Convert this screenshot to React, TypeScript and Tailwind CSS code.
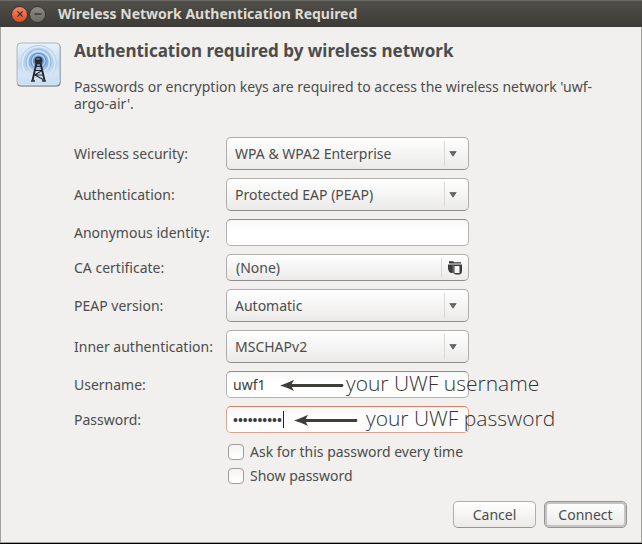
import { useState } from "react";
import type { InputHTMLAttributes, ReactNode } from "react";

function Row({ id, label, children }: { id: string; label: string; children: ReactNode }) {
  return (
    <div className="flex items-center">
      <label htmlFor={id} className="w-[152px] shrink-0 whitespace-nowrap">
        {label}
      </label>
      <div className="relative w-[243px] shrink-0">{children}</div>
    </div>
  );
}

function Combo({ id, options }: { id: string; options: string[] }) {
  return (
    <>
      <select
        id={id}
        className="block h-[33px] w-full appearance-none rounded-[5px] border border-[#b0aeab] border-b-[#8f8d8a] bg-linear-to-b from-white to-[#ebeae9] pr-8 pl-2 outline-none"
      >
        {options.map((option) => (
          <option key={option}>{option}</option>
        ))}
      </select>
      <span className="pointer-events-none absolute inset-y-1 right-0 flex w-[25px] items-center border-l border-[#dad8d6] pl-1">
        <svg viewBox="0 0 8 6" className="h-[6px] w-2" aria-hidden="true">
          <path d="M0.3 0.3H7.7L4 5.7Z" fill="#4c4c4c" />
          <path d="M2 1.6H6L4 4.4Z" fill="#777" />
        </svg>
      </span>
    </>
  );
}

function Entry({ active, ...props }: { active?: boolean } & InputHTMLAttributes<HTMLInputElement>) {
  return (
    <input
      {...props}
      className={
        "block h-[27px] w-full rounded-[5px] border bg-linear-to-b from-[#f6f6f6] to-white to-40% px-1.5 text-[#3c3c3c] outline-none " +
        (active ? "border-[#e6a18a] border-t-[#dd7f60] text-[13px] font-bold" : "border-[#b5b3b1] border-t-[#8b8a89]")
      }
    />
  );
}

function Note({ text, className, textClass }: { text: string; className: string; textClass: string }) {
  return (
    <span
      className={
        "pointer-events-none absolute inset-y-0 flex items-center font-['Open_Sans','Noto_Sans',sans-serif] font-light text-[#333] " +
        className
      }
    >
      <svg viewBox="0 0 64 12" className="h-3 w-16 shrink-0" aria-hidden="true">
        <path d="M11 6.5H62" stroke="#3f3e39" strokeWidth="2.8" strokeLinecap="round" />
        <path d="M0 6.5C5 5 10 3 14 0.8L11 6.5L14 12C10 9.8 5 8 0 6.5Z" fill="#3f3e39" />
      </svg>
      <span className={"pb-1 text-[21px] leading-6 whitespace-nowrap " + textClass}>{text}</span>
    </span>
  );
}

function Check({ label, checked, onChange }: { label: string; checked?: boolean; onChange?: (on: boolean) => void }) {
  return (
    <label className="flex h-6 items-center gap-1.5">
      <input
        type="checkbox"
        checked={checked}
        onChange={(event) => onChange?.(event.target.checked)}
        className="size-4 appearance-none rounded-[4px] border border-[#a09e9c] bg-linear-to-b from-[#f4f4f4] to-white checked:bg-[#dd7f60]"
      />
      <span className="pb-0.5">{label}</span>
    </label>
  );
}

function AntennaIcon() {
  return (
    <svg viewBox="0 0 46 46" className="size-[46px] shrink-0" aria-hidden="true">
      <defs>
        <linearGradient id="tile" x1="0" y1="0" x2="0" y2="1">
          <stop offset="0" stopColor="#eaf1f9" />
          <stop offset="0.5" stopColor="#c5dbf2" />
          <stop offset="1" stopColor="#dbe9f7" />
        </linearGradient>
        <linearGradient id="ground" x1="0" y1="0" x2="0" y2="1">
          <stop offset="0" stopColor="#d3e4f5" stopOpacity="0" />
          <stop offset="0.5" stopColor="#d3e4f5" />
          <stop offset="1" stopColor="#c9def3" />
        </linearGradient>
      </defs>
      <rect x="2" y="2.5" width="43.5" height="43" rx="4" fill="#5c6672" />
      <rect x="2" y="2" width="43" height="42.5" rx="4" fill="url(#tile)" stroke="#a7b0ba" strokeWidth="0.9" />
      <circle cx="23.5" cy="22" r="18" fill="#b4d0ed" />
      <circle cx="23.5" cy="22" r="16.2" fill="none" stroke="#dceaf8" strokeWidth="1.8" />
      <circle cx="23.5" cy="21" r="12.8" fill="#8db4df" />
      <circle cx="23.5" cy="21" r="11" fill="none" stroke="#cfe2f5" strokeWidth="1.8" />
      <circle cx="23.5" cy="20" r="8" fill="#6595cc" />
      <circle cx="23.5" cy="20" r="6.3" fill="none" stroke="#b4d0ee" strokeWidth="1.4" />
      <path d="M3 24H44V41Q44 43.5 41.5 43.5H5.500Q3 43.500 3 41Z" fill="url(#ground)" />
      <path d="M21.700 21L17.500 39.500M25.300 21L29.500 39.500" stroke="#25282b" strokeWidth="1.9" />
      <path d="M20 29.500H27M19 34H28M20 34L28 38.500M26.500 30L19.500 34M21 25.500H26" stroke="#25282b" strokeWidth="1.1" />
      <path d="M16 40H20M27 40H31" stroke="#25282b" strokeWidth="1.6" />
      <circle cx="23.5" cy="19.5" r="3.8" fill="#292b2e" />
      <ellipse cx="23" cy="17.8" rx="2.2" ry="1.1" fill="#6d7073" />
    </svg>
  );
}

function WindowButton({ label, close }: { label: string; close?: boolean }) {
  return (
    <button
      type="button"
      aria-label={label}
      className={
        "flex size-[17px] items-center justify-center rounded-full border border-[#35342f] bg-linear-to-b " +
        (close ? "from-[#f58463] to-[#df4b1b]" : "from-[#8b8a83] to-[#6c6b65]")
      }
    >
      <svg viewBox="0 0 8 8" className="size-2" fill="none" stroke="#3a2b24" strokeWidth="1.3" aria-hidden="true">
        <path d={close ? "M1.4 1.4L6.6 6.6M6.6 1.4L1.4 6.6" : "M0.5 4H7.5"} />
      </svg>
    </button>
  );
}

export default function App() {
  const [username, setUsername] = useState("uwf1");
  const [password, setPassword] = useState("password12");
  const [identity, setIdentity] = useState("");
  const [ask, setAsk] = useState(false);
  const [show, setShow] = useState(false);

  return (
    <div className="flex min-h-screen flex-col border-b border-black bg-[#3c3b37] font-['Noto_Sans','Open_Sans',sans-serif] text-[14px] leading-[17px] text-[#4c4c4c]">
      <header className="flex h-[27px] items-center gap-px border-t border-[#6b6a64] bg-linear-to-b from-[#504f49] to-[#3c3b37] pl-[11px]">
        <WindowButton label="Close" close />
        <WindowButton label="Minimize" />
        <h1 className="pb-0.5 pl-[11px] text-[14px] font-bold text-[#dfdbd2]">Wireless Network Authentication Required</h1>
      </header>

      <main className="flex flex-1 flex-col border-x border-b border-[#a3a19e] bg-[#f1f0ee] px-[14px] pt-[14px] pb-[14px]">
        <div className="flex items-start gap-[13px]">
          <AntennaIcon />
          <div className="min-w-0 flex-1">
            <h2 className="text-[17px] leading-5 font-bold">Authentication required by wireless network</h2>
            <p className="mt-[17px]">
              Passwords or encryption keys are required to access the wireless network 'uwf-argo-air'.
            </p>
            <form className="mt-[25px] flex flex-col gap-2">
              <Row id="security" label="Wireless security:">
                <Combo id="security" options={["WPA & WPA2 Enterprise"]} />
              </Row>
              <Row id="auth" label="Authentication:">
                <Combo id="auth" options={["Protected EAP (PEAP)"]} />
              </Row>
              <Row id="identity" label="Anonymous identity:">
                <Entry id="identity" value={identity} onChange={(event) => setIdentity(event.target.value)} />
              </Row>
              <Row id="certificate" label="CA certificate:">
                <button
                  id="certificate"
                  type="button"
                  className="flex h-[27px] w-full items-center justify-between rounded-[5px] border border-[#b0aeab] border-b-[#8f8d8a] bg-linear-to-b from-white to-[#ebeae9] pr-1.5 pl-[9px]"
                >
                  <span>(None)</span>
                  <span className="flex h-[19px] items-center border-l border-[#dad8d6] pl-1.5">
                    <svg viewBox="0 0 14 14" className="size-[14px]" aria-hidden="true">
                      <path d="M1 0.300H5L6 1.300H13V2.500H1Z" fill="#333" />
                      <path d="M0 3.500H14V9.500Q14 13.500 11 13.500H7.500L5 12H3Q0.500 11 0 8Z" fill="#3b3b3b" />
                      <path d="M6.500 5H11.500V12H6.500Z" fill="#f4f4f4" />
                      <path d="M5.200 4.500V12" stroke="#888" strokeWidth="0.9" />
                    </svg>
                  </span>
                </button>
              </Row>
              <Row id="peap" label="PEAP version:">
                <Combo id="peap" options={["Automatic", "Version 0", "Version 1"]} />
              </Row>
              <Row id="inner" label="Inner authentication:">
                <Combo id="inner" options={["MSCHAPv2", "MD5", "GTC"]} />
              </Row>
              <Row id="username" label="Username:">
                <Entry id="username" value={username} onChange={(event) => setUsername(event.target.value)} />
                <Note text="your UWF username" className="left-[54px]" textClass="pl-0.5" />
              </Row>
              <Row id="password" label="Password:">
                <Entry
                  id="password"
                  active
                  type={show ? "text" : "password"}
                  value={password}
                  onChange={(event) => setPassword(event.target.value)}
                />
                <span className="pointer-events-none absolute top-[5px] left-[57px] h-[17px] w-px bg-[#222]" />
                <Note text="your UWF password" className="left-[68px]" textClass="pl-2" />
              </Row>
              <div className="-mt-[1px] ml-[154px]">
                <Check label="Ask for this password every time" checked={ask} onChange={setAsk} />
                <Check label="Show password" checked={show} onChange={setShow} />
              </div>
            </form>
          </div>
        </div>

        <footer className="mt-auto flex justify-end gap-2">
          <button
            type="button"
            className="h-[27px] w-[83px] rounded-[5px] border border-[#b0aeab] border-b-[#979593] bg-linear-to-b from-white to-[#ebeae9]"
          >
            Cancel
          </button>
          <button
            type="button"
            className="h-[27px] w-[83px] rounded-[5px] border border-[#979593] bg-linear-to-b from-white to-[#ebeae9] ring-2 ring-[#c6c4c2] ring-inset"
          >
            Connect
          </button>
        </footer>
      </main>
    </div>
  );
}
